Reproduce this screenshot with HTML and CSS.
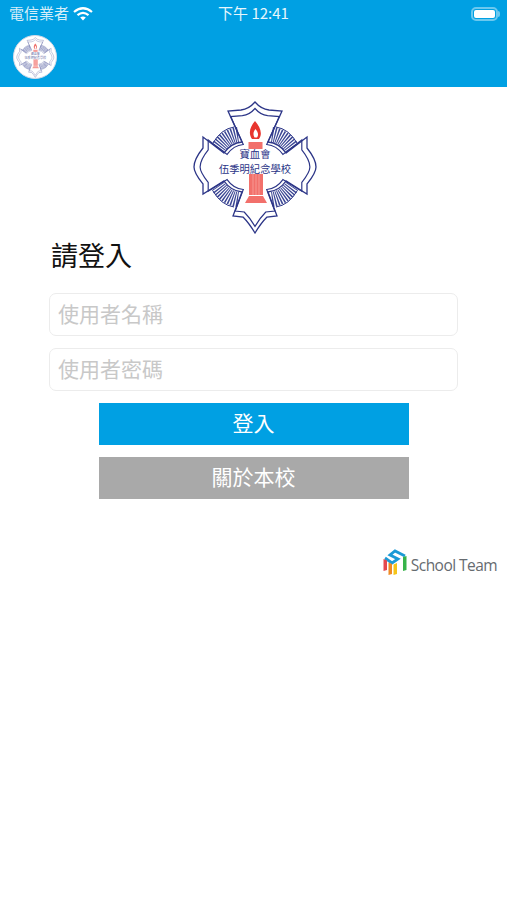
FILE: index.html
```html
<!DOCTYPE html>
<html lang="zh-Hant">
<head>
    <meta charset="UTF-8">
    <meta name="viewport" content="width=device-width, initial-scale=1.0">
    <title>請登入</title>
    <link rel="stylesheet" href="styles.css">
</head>
<body>
    <header class="topbar">
        <div class="status">
            <div class="status-left">
                <span>電信業者</span>
                <svg class="wifi" viewBox="0 0 20 14" width="20" height="14">
                    <path d="M1 5 Q10 -2.500 19 5" />
                    <path d="M4.500 8.200 Q10 3.500 15.500 8.200" />
                    <path class="dot" d="M7.200 10.600 Q10 8.200 12.800 10.600 L10 13.500 Z" />
                </svg>
            </div>
            <div class="status-time">下午 12:41</div>
            <div class="battery"><span class="battery-fill"></span></div>
        </div>
        <div class="nav">
            <div class="nav-logo">
                <svg class="nav-crest" viewBox="-66 -67 130 135" width="40" height="41"><use href="#crest-art"/></svg>
            </div>
        </div>
    </header>

    <main class="login">
        <svg class="crest" viewBox="-66 -67 130 135" width="130" height="135">
            <g id="crest-art">
                <!-- ray fans between the arms -->
                <g id="fan-left">
                    <g id="fan">
                        <path class="rays" d="M-17 -32.500 Q-29 -31 -37 -19"/>
                        <path class="rim" d="M-21 -40 Q-34 -38 -42 -24"/>
                    </g>
                    <use href="#fan" transform="scale(1 -1)"/>
                </g>
                <use href="#fan-left" transform="scale(-1 1)"/>

                <!-- double outline of the cross -->
                <path id="cross" class="line" d="M0 -65 Q-6 -58 -14 -57 L-27 -56 L-13 -25 Q-24 -24 -31 -14 L-52 -30 L-52 -19 C-56 -14 -61 -6 -61 0 C-61 6 -56 12 -52 17 L-52 27 L-31 14 Q-24 24 -13 25 L-22 49 L-12 50 Q-6 56 0 66 Q6 56 12 50 L22 49 L13 25 Q24 24 31 14 L52 27 L52 17 C56 12 61 6 61 0 C61 -6 56 -14 52 -19 L52 -30 L31 -14 Q24 -24 13 -25 L27 -56 L14 -57 Q6 -58 0 -65 Z"/>
                <use href="#cross" transform="scale(0.9)"/>

                <!-- torch -->
                <path class="flame" d="M0 -46 C5 -40 8 -34 4 -28 L-3 -28 C-7 -34 -5 -40 0 -46 Z M0.500 -38 C-2 -35 -2 -32 -0.500 -29.500 L2 -29.500 C4 -32 3 -35 0.500 -38 Z"/>
                <rect class="red" x="-6.500" y="-25" width="14" height="7"/>
                <rect class="red" x="-6" y="7" width="14" height="21"/>
                <path class="column-lines" d="M-2 7 V28 M1 7 V28 M4 7 V28"/>
                <path class="red" d="M-6 29 L8 29 L12 36 L-10 36 Z"/>

                <text class="crest-text" x="0" y="-9" text-anchor="middle">寶血會</text>
                <text class="crest-text" x="0" y="6" text-anchor="middle">伍季明紀念學校</text>
            </g>
        </svg>
        <h1>請登入</h1>
        <input class="field" type="text" placeholder="使用者名稱">
        <input class="field" type="password" placeholder="使用者密碼">
        <button class="btn btn-blue">登入</button>
        <button class="btn btn-grey">關於本校</button>
    </main>

    <div class="brand">
        <svg class="brand-mark" viewBox="0 0 32 34" width="32" height="34">
            <path class="m-blue" d="M26 10 L16 5 L11 9 L19 13 L13 17 L6 12"/>
            <path class="m-red" d="M4.500 13 L8 14.500 V24 L4.500 25 Z"/>
            <path class="m-orange" d="M9.500 16.500 L13 18 V28 L9.500 29 Z"/>
            <path class="m-yellow" d="M14.500 18.500 L18 17 V28 L14.500 29 Z"/>
            <path class="m-green" d="M24 11 L27.500 10 V24 L24 25 Z"/>
        </svg>
        <span>School Team</span>
    </div>
</body>
</html>
```

FILE: styles.css
```css
body {
    margin: 0;
    background: #fff;
    font-family: "Noto Sans CJK TC", "Noto Sans", sans-serif;
    overflow: hidden;
}

/* top bar */
.topbar {
    background: #00a0e3;
    height: 87px;
    color: #fff;
}

.status {
    box-sizing: border-box;
    height: 27px;
    display: grid;
    grid-template-columns: 1fr auto 1fr;
    align-items: center;
    padding: 0 9px;
    font-size: 15px;
    line-height: 25px;
}

.status-left {
    display: flex;
    align-items: center;
    gap: 4px;
    color: #d5eef9;
}

.wifi {
    fill: none;
    stroke: #fff;
    stroke-width: 2.2;
}

.wifi .dot {
    fill: #fff;
    stroke: none;
}

.status-time {
    padding-bottom: 2px;
    color: #e6f6fc;
}

.status-left span {
    padding-bottom: 2px;
}

.battery {
    position: relative;
    justify-self: end;
    box-sizing: border-box;
    width: 27px;
    height: 14px;
    padding: 1px;
    border: 2px solid #6cc8ee;
    border-radius: 5px;
}

.battery::after {
    content: "";
    position: absolute;
    top: 2px;
    right: -4px;
    width: 2px;
    height: 6px;
    background: #6cc8ee;
    border-radius: 0 2px 2px 0;
}

.battery-fill {
    display: block;
    height: 100%;
    background: #fff;
    border-radius: 2px;
}

.nav {
    padding: 8px 13px;
}

.nav-logo {
    width: 44px;
    height: 44px;
    box-sizing: border-box;
    border: 1px solid #d4d9e8;
    border-radius: 50%;
    background: #fff;
    display: flex;
    justify-content: center;
    align-items: center;
}

.nav-crest {
    opacity: 0.7;
}

/* crest */
.line {
    fill: none;
    stroke: #2c3587;
    stroke-width: 1.3;
}

.rays {
    fill: none;
    stroke: #3c4795;
    stroke-width: 15;
    stroke-dasharray: 1.3 1.1;
}

.rim {
    fill: none;
    stroke: #2c3587;
    stroke-width: 1;
}

.flame {
    fill: #e8352e;
    fill-rule: evenodd;
}

.red {
    fill: #f2706b;
}

.column-lines {
    fill: none;
    stroke: #f9a3a0;
    stroke-width: 0.8;
}

.crest-text {
    fill: #2c3587;
    font-size: 10.3px;
}

/* login form */
.login {
    display: flex;
    flex-direction: column;
    align-items: center;
    padding-top: 13px;
}

.crest {
    display: block;
}

h1 {
    align-self: flex-start;
    margin: 3px 0 21px 51px;
    font-size: 27px;
    line-height: 34px;
    font-weight: 400;
    color: #111;
}

.field {
    box-sizing: border-box;
    width: 409px;
    height: 43px;
    margin-bottom: 12px;
    padding: 0 8px 4px;
    border: 1px solid #ececec;
    border-radius: 7px;
    font-family: inherit;
    font-size: 21px;
    outline: none;
}

.field::placeholder {
    color: #c8c8c8;
}

.btn {
    width: 310px;
    height: 42px;
    margin-bottom: 12px;
    padding: 0 0 4px;
    border: none;
    color: #fff;
    font-family: inherit;
    font-size: 21px;
}

.btn-blue {
    background: #00a0e3;
}

.btn-grey {
    background: #a9a9a9;
}

/* brand */
.brand {
    display: flex;
    justify-content: flex-end;
    align-items: center;
    margin-top: 35px;
    padding-right: 10px;
    color: #666b70;
    font-family: "Open Sans", sans-serif;
    font-size: 15.5px;
    letter-spacing: -0.55px;
}

.brand span {
    margin-top: 3px;
}

.m-blue {
    fill: none;
    stroke: #1b9ad6;
    stroke-width: 2.8;
}

.m-red { fill: #e5484d; }
.m-orange { fill: #f08a24; }
.m-yellow { fill: #f5c518; }
.m-green { fill: #37b34a; }
```
